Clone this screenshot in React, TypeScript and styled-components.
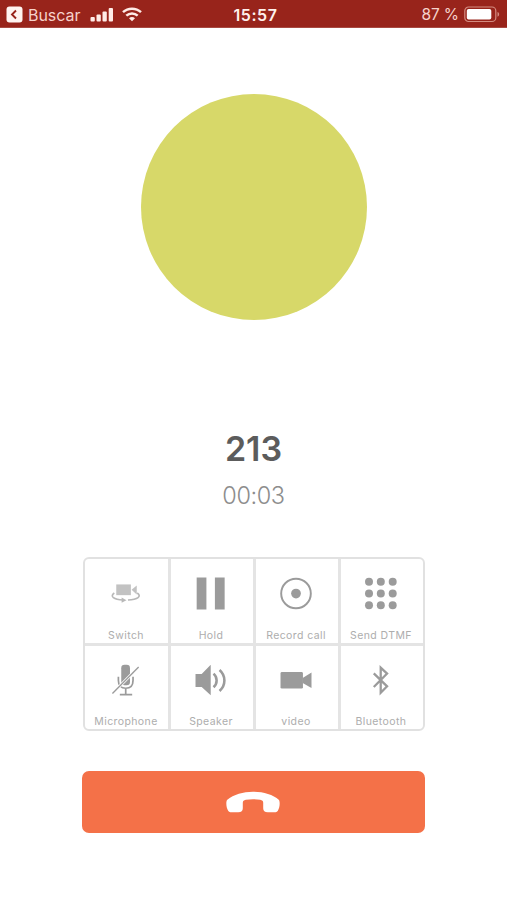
import React from "react";
import styled, { createGlobalStyle } from "styled-components";

const GlobalStyle = createGlobalStyle`
  * { box-sizing: border-box; }
  body { margin: 0; background: #fff; font-family: Inter, "Liberation Sans", sans-serif; }
`;

const Screen = styled.main`
  width: 507px;
  height: 900px;
  display: flex;
  flex-direction: column;
  align-items: center;
  background: #fff;
  overflow: hidden;
`;

const StatusBar = styled.header`
  width: 100%;
  height: 28px;
  flex: none;
  display: grid;
  grid-template-columns: 1fr auto 1fr;
  align-items: center;
  padding: 2px 7px 0 6px;
  background: #98241b;
  border-bottom: 1px solid #a84a42;
  color: #f6d2cb;
  font-size: 16px;
  line-height: 20px;
`;

const StatusGroup = styled.div<{ $end?: boolean }>`
  display: flex;
  align-items: center;
  justify-content: ${(p) => (p.$end ? "flex-end" : "flex-start")};
`;

const BackLabel = styled.span`
  margin: 0 10px 0 5px;
  letter-spacing: -0.05px;
`;

const Clock = styled.time`
  padding-left: 5px;
  font-weight: 600;
  color: #fff0ec;
  letter-spacing: 0.6px;
`;

const Percent = styled.span`
  margin: 1px 5px 0 0;
  font-size: 15.5px;
  letter-spacing: -0.1px;
`;

const SignalIcon = styled.svg`
  margin-right: 8px;
`;

const Avatar = styled.div`
  width: 226px;
  height: 226px;
  margin-top: 66px;
  margin-left: 1px;
  flex: none;
  border-radius: 50%;
  background: #d7d869;
`;

const Caller = styled.h1`
  margin: 108px 0 0;
  height: 42px;
  font-size: 34px;
  line-height: 42px;
  font-weight: 600;
  letter-spacing: 0;
  color: #5c5c5c;
`;

const Duration = styled.p`
  margin: 11px 0 0;
  height: 30px;
  font-size: 23.5px;
  line-height: 30px;
  font-weight: 300;
  letter-spacing: -0.4px;
  color: #8d8d8d;
`;

const Controls = styled.div`
  width: 342px;
  height: 174px;
  margin-top: 46px;
  margin-left: 1px;
  flex: none;
  display: grid;
  grid-template-columns: 83px 82px 82px 82px;
  grid-template-rows: 84px 83px;
  gap: 3px;
  border: 2px solid #e1e1e1;
  border-radius: 6px;
  background: #e4e4e4;
  overflow: hidden;
`;

const Control = styled.button`
  display: flex;
  flex-direction: column;
  align-items: center;
  border: 0;
  margin: 0;
  padding: 15px 2px 0 0;
  background: #fff;
  color: #9b9b9b;
  font-family: inherit;

  &:nth-child(4n + 1) {
    padding-right: 1px;
  }
`;

const ControlLabel = styled.span`
  margin-top: 16px;
  font-size: 10.5px;
  line-height: 14px;
  white-space: nowrap;
  color: #adadad;
  letter-spacing: 0.4px;
`;

const HangUp = styled.button`
  width: 343px;
  height: 62px;
  margin-top: 40px;
  flex: none;
  display: flex;
  align-items: center;
  justify-content: center;
  padding: 0 1px 0 0;
  border: 0;
  border-radius: 7px;
  background: #f47148;
`;

const controls: { label: string; icon: React.ReactNode }[] = [
  {
    label: "Switch",
    icon: (
      <g fill="#c2c2c2">
        <rect x="10" y="10.7" width="15" height="11" />
        <path d="M25.7 16.2 31 11.7v9.3z" />
        <path d="M8 19.500C3 23 7.500 26.300 17 26.700M31.500 19.500c5 3.500.500 6.800-9.500 7.200" fill="none" stroke="#b8b8b8" strokeWidth="1.700" />
        <path d="m15.500 24 5 2.800-5 2.600z" fill="#b8b8b8" />
      </g>
    ),
  },
  {
    label: "Hold",
    icon: <path d="M5.300 3.700h10v32.600h-10zM24 3.700h10v32.600H24z" />,
  },
  {
    label: "Record call",
    icon: (
      <>
        <circle cx="20" cy="20" r="15.200" fill="none" stroke="currentColor" strokeWidth="2" />
        <circle cx="20" cy="20" r="5" />
      </>
    ),
  },
  {
    label: "Send DTMF",
    icon: (
      <>
        {[8, 20, 32].flatMap((cy) => [7.7, 19.8, 32].map((cx) => <circle key={`${cx}-${cy}`} cx={cx} cy={cy} r="4.100" />))}
      </>
    ),
  },
  {
    label: "Microphone",
    icon: (
      <>
        <rect x="15" y="4" width="9.200" height="21.500" rx="3.500" />
        <path d="M12 16.500v4c0 6 3 8.200 7.700 8.200s7.700-2.200 7.700-8.200v-4M19.700 28.500V35M13.500 35.500h13" fill="none" stroke="currentColor" strokeWidth="1.800" />
        <path d="M5.700 34.300 33.300 6.300" stroke="#fff" strokeWidth="3" />
        <path d="M5.700 34.300 33.300 6.300" stroke="currentColor" strokeWidth="1.400" />
      </>
    ),
  },
  {
    label: "Speaker",
    icon: (
      <>
        <path d="M3.700 13.700h6.500L19.700 4v32l-9.500-8.700H3.700z" />
        <path d="M22.700 13.300c4.300 4 4.300 10.300 0 14.300M29 9.500c6.800 6 6.800 16 0 22" fill="none" stroke="currentColor" strokeWidth="2.700" />
      </>
    ),
  },
  {
    label: "video",
    icon: (
      <>
        <rect x="3.700" y="11.700" width="23.600" height="17.300" rx="1.500" />
        <path d="M27 18l9.300-6v16.500l-9.300-5.300z" />
      </>
    ),
  },
  {
    label: "Bluetooth",
    icon: (
      <path d="m12.400 13 14 13.700-6.700 6.800V7l6.700 6.300-14 14" fill="none" stroke="currentColor" strokeWidth="2.400" />
    ),
  },
];

export default function App() {
  return (
    <>
      <GlobalStyle />
      <Screen>
        <StatusBar>
          <StatusGroup>
            <svg width="17" height="17" viewBox="0 0 17 17" aria-hidden="true">
              <rect x="0.500" y="0.500" width="16" height="16" rx="3" fill="#fff4f1" />
              <path d="m10 4.500-4 4 4 4" fill="none" stroke="#98241b" strokeWidth="1.900" />
            </svg>
            <BackLabel>Buscar</BackLabel>
            <SignalIcon width="24" height="15" viewBox="0 0 24 15" fill="#ffece7" aria-hidden="true">
              <rect x="0.500" y="10" width="4.300" height="4.500" rx="1" />
              <rect x="6.500" y="7.500" width="4.300" height="7" rx="1" />
              <rect x="12.500" y="4.500" width="4.300" height="10" rx="1" />
              <rect x="18.700" y="1" width="4.300" height="13.500" rx="1" />
            </SignalIcon>
            <svg width="20" height="15" viewBox="0 0 20 15" fill="none" stroke="#ffece7" strokeWidth="2.500" aria-hidden="true">
              <path d="M1 5.200c5-4.700 13-4.700 18 0M4.300 8.700c3.300-3 8.100-3 11.400 0" />
              <path d="M7 11.200c1.700-1.600 4.300-1.600 6 0l-3 3.100z" fill="#ffece7" stroke="none" />
            </svg>
          </StatusGroup>
          <Clock>15:57</Clock>
          <StatusGroup $end>
            <Percent>87 %</Percent>
            <svg width="36" height="17" viewBox="0 0 36 17" aria-hidden="true">
              <rect x="0.800" y="1" width="31" height="14.500" rx="3.800" fill="none" stroke="#d48b80" strokeWidth="1.200" />
              <rect x="2.800" y="3" width="24.500" height="10.500" rx="1.800" fill="#fff" />
              <path d="M33.500 6c2.200.700 2.200 4 0 4.700z" fill="#d48b80" />
            </svg>
          </StatusGroup>
        </StatusBar>
        <Avatar />
        <Caller>213</Caller>
        <Duration>00:03</Duration>
        <Controls>
          {controls.map(({ label, icon }) => (
            <Control key={label}>
              <svg width="40" height="40" viewBox="0 0 40 40" fill="currentColor" aria-hidden="true">
                {icon}
              </svg>
              <ControlLabel>{label}</ControlLabel>
            </Control>
          ))}
        </Controls>
        <HangUp aria-label="End call">
          <svg width="54" height="22" viewBox="0 0 54 22" fill="#fff" aria-hidden="true">
            <path d="M1 9C8 3.500 17 .800 27 .800S47 3.500 53 9c1.200 2 .800 7.800-1.300 11-.700 1-1.700 1.200-3 1.200h-7c-3 0-4.500-1.400-4.500-4v-5.500c0-1.700-1-2.500-3-2.900-4.700-.800-9.700-.800-14.400 0-2 .400-3 1.200-3 2.900v5.500c0 2.600-1.500 4-4.500 4h-7c-1.300 0-2.300-.200-3-1.200C.200 16.800-.200 11 1 9z" />
          </svg>
        </HangUp>
      </Screen>
    </>
  );
}
